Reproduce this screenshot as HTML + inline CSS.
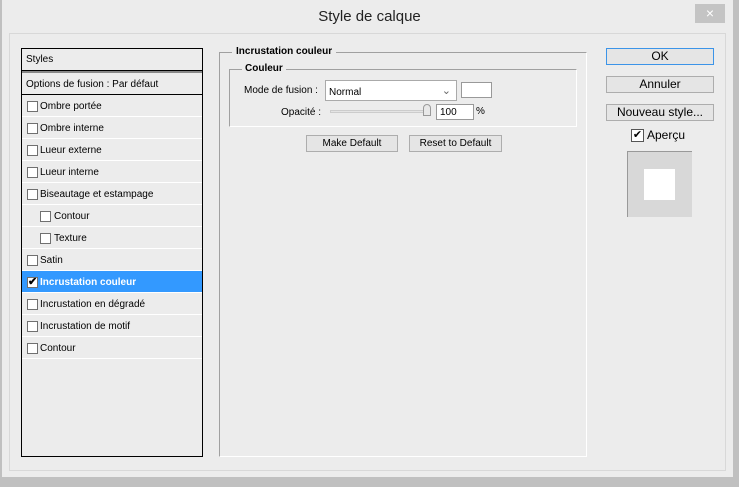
<!DOCTYPE html>
<html><head><meta charset="utf-8"><style>
*{margin:0;padding:0;box-sizing:border-box}
body{width:739px;height:487px;background:#c0c0c0;position:relative;overflow:hidden;font-family:"Liberation Sans",sans-serif;font-size:10px;color:#000}
.a{position:absolute}
.win{left:2px;top:0;width:731px;height:477px;background:#ececec}
.row{position:absolute;left:22px;width:180px;height:22px;border-bottom:1px solid #fff;line-height:23px;font-size:10px}
.cb{position:absolute;top:6px;width:11px;height:11px;border:1px solid #707070;background:#fff}
.btn{position:absolute;height:17px;border:1px solid #adadad;background:#e5e5e5;text-align:center;line-height:15px}
</style></head><body>
<div class="a win"></div>
<div class="a" style="left:0;top:8px;width:739px;text-align:center;font-size:15px;color:#222">Style de calque</div>
<div class="a" style="left:695px;top:4px;width:30px;height:19px;background:#c4c4c4;color:#fff;text-align:center;font-size:14px;line-height:19px">×</div>
<div class="a" style="left:9px;top:33px;width:717px;height:438px;border:1px solid #d8d8d8"></div>
<div class="a" style="left:21px;top:48px;width:182px;height:409px;border:1px solid #000;background:#ececec"></div>
<div class="row" style="top:49px;height:21px;border:none;padding-left:4px;line-height:21px">Styles</div>
<div class="a" style="left:22px;top:70px;width:180px;height:3px;background:#888;border-top:1px solid #000"></div>
<div class="row" style="top:73px;border-bottom:1px solid #000;padding-left:4px">Options de fusion : Par défaut</div>
<div class="row" style="top:95px;padding-left:18px"><span class="cb" style="left:5px"></span>Ombre portée</div>
<div class="row" style="top:117px;padding-left:18px"><span class="cb" style="left:5px"></span>Ombre interne</div>
<div class="row" style="top:139px;padding-left:18px"><span class="cb" style="left:5px"></span>Lueur externe</div>
<div class="row" style="top:161px;padding-left:18px"><span class="cb" style="left:5px"></span>Lueur interne</div>
<div class="row" style="top:183px;padding-left:18px"><span class="cb" style="left:5px"></span>Biseautage et estampage</div>
<div class="row" style="top:205px;padding-left:32px"><span class="cb" style="left:18px"></span>Contour</div>
<div class="row" style="top:227px;padding-left:32px"><span class="cb" style="left:18px"></span>Texture</div>
<div class="row" style="top:249px;padding-left:18px"><span class="cb" style="left:5px"></span>Satin</div>
<div class="row" style="top:271px;padding-left:18px;background:#3399ff;color:#fff;font-weight:bold"><span class="cb" style="left:5px;color:#000;font-size:11px;line-height:9px;text-align:center">✔</span>Incrustation couleur</div>
<div class="row" style="top:293px;padding-left:18px"><span class="cb" style="left:5px"></span>Incrustation en dégradé</div>
<div class="row" style="top:315px;padding-left:18px"><span class="cb" style="left:5px"></span>Incrustation de motif</div>
<div class="row" style="top:337px;padding-left:18px"><span class="cb" style="left:5px"></span>Contour</div>
<div class="a" style="left:219px;top:52px;width:368px;height:405px;border:1px solid #a0a0a0;border-right-color:#fff;border-bottom-color:#fff"></div>
<div class="a" style="left:232px;top:46px;padding:0 4px;background:#ececec;font-weight:bold">Incrustation couleur</div>
<div class="a" style="left:229px;top:69px;width:348px;height:58px;border:1px solid #a0a0a0;border-right-color:#fff;border-bottom-color:#fff"></div>
<div class="a" style="left:242px;top:63px;padding:0 3px;background:#ececec;font-weight:bold">Couleur</div>
<div class="a" style="left:244px;top:85px">Mode de fusion :</div>
<div class="a" style="left:325px;top:80px;width:132px;height:21px;border:1px solid #aaa;background:#fff;padding:6px 0 0 3px">Normal<span class="a" style="right:5px;top:3px;color:#666;font-size:11px">⌄</span></div>
<div class="a" style="left:461px;top:82px;width:31px;height:16px;border:1px solid #999;background:#fff"></div>
<div class="a" style="left:281px;top:107px">Opacité :</div>
<div class="a" style="left:330px;top:110px;width:100px;height:3px;border:1px solid #ccc;background:#e4e4e4"></div>
<div class="a" style="left:423px;top:104px;width:8px;height:12px;border:1px solid #999;background:#e8e8e8;border-radius:4px 4px 0 0"></div>
<div class="a" style="left:436px;top:104px;width:38px;height:16px;border:1px solid #999;background:#fff;padding:2px 0 0 3px">100</div>
<div class="a" style="left:476px;top:106px">%</div>
<div class="btn" style="left:306px;top:135px;width:92px">Make Default</div>
<div class="btn" style="left:409px;top:135px;width:93px">Reset to Default</div>
<div class="btn" style="left:606px;top:48px;width:108px;border-color:#3c94e8;font-size:12px">OK</div>
<div class="btn" style="left:606px;top:76px;width:108px;font-size:12px">Annuler</div>
<div class="btn" style="left:606px;top:104px;width:108px;font-size:12px">Nouveau style...</div>
<div class="a" style="left:631px;top:129px;width:13px;height:13px;border:1px solid #555;background:#fff;font-size:11px;line-height:11px;text-align:center">✔</div>
<div class="a" style="left:647px;top:128px;font-size:12px">Aperçu</div>
<div class="a" style="left:627px;top:151px;width:65px;height:66px;background:#d8d8d8;border-left:1px solid #999;border-top:1px solid #999"></div>
<div class="a" style="left:644px;top:169px;width:31px;height:31px;background:#fff"></div>
</body></html>
